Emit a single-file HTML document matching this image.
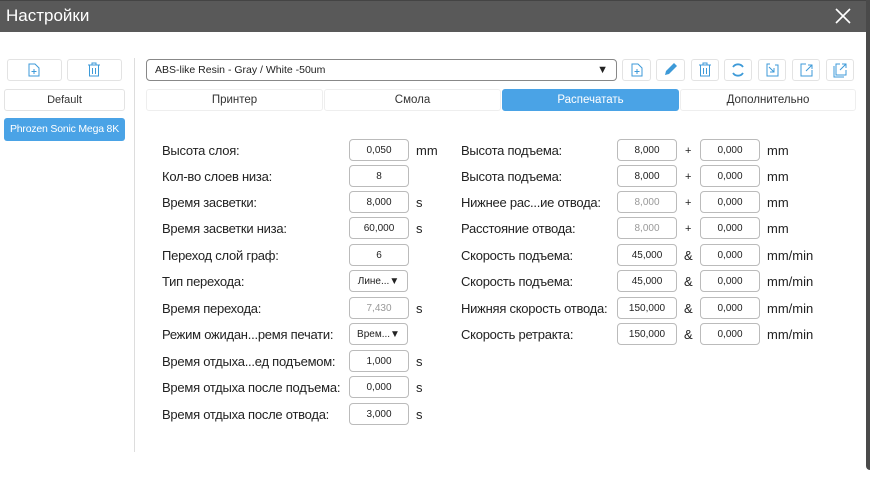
<!DOCTYPE html><html><head><meta charset="utf-8"><style>
*{box-sizing:border-box;margin:0;padding:0}
body{width:870px;height:477px;background:#fff;font-family:"Liberation Sans","DejaVu Sans",sans-serif;position:relative;overflow:hidden;color:#222}
.a{position:absolute}
.tb{left:0;top:0;width:870px;height:32px;background:#595959;border-top:1px solid #444}
.tt{left:6px;top:6px;color:#fff;font-size:17px}
.rb{left:866px;top:0;width:4px;height:470px;background:#4a4a4a;border-bottom-left-radius:4px}
.btn{border:1px solid #e3e3e3;border-radius:3px;background:#fff}
.lbl{font-size:13px;letter-spacing:-0.25px;color:#222;white-space:nowrap}
.in{width:60px;height:22px;border:1px solid #bbb;border-radius:4px;font-size:10px;text-align:center;line-height:21px;color:#222;background:#fff}
.g{color:#999}
.u{font-size:13px}
.p{font-size:11px}
.tab{top:89px;height:22px;font-size:11.5px;text-align:center;line-height:21px;color:#333;border:1px solid #eee;border-radius:3px;background:#fff}
</style></head><body>
<div class="a tb"></div><div class="a tt">Настройки</div>
<svg class="a" style="left:835px;top:8px" width="16" height="16"><path d="M1 1L15 15M15 1L1 15" stroke="#fff" stroke-width="1.6"/></svg>
<div class="a rb"></div>

<div class="a btn" style="left:7px;top:59px;width:55px;height:22px"></div>
<svg class="a" style="left:28px;top:63px" width="12" height="14"><path d="M1 1h6l4 4v8H1z" fill="none" stroke="#3d9ad8"/><path d="M6 6v5M3.5 8.5h5" stroke="#3d9ad8"/></svg>
<div class="a btn" style="left:67px;top:59px;width:55px;height:22px"></div>
<svg class="a" style="left:87px;top:62px" width="14" height="15"><path d="M1 3h12M5 3V1h4v2M2.5 3v11h9V3M5.5 6v6M8.5 6v6" fill="none" stroke="#3d9ad8"/></svg>
<div class="a btn" style="left:4px;top:89px;width:121px;height:22px;font-size:11px;text-align:center;line-height:21px;color:#333">Default</div>
<div class="a" style="left:4px;top:118px;width:121px;height:23px;background:#4aa3e6;border-radius:3px;color:#fff;font-size:10.5px;letter-spacing:-0.2px;text-align:center;line-height:23px">Phrozen Sonic Mega 8K</div>
<div class="a" style="left:134px;top:58px;width:1px;height:394px;background:#ddd"></div>

<div class="a" style="left:146px;top:59px;width:471px;height:22px;border:1px solid #888;border-radius:4px;font-size:10.5px;line-height:20px;padding-left:8px">ABS-like Resin - Gray / White -50um<span class="a" style="right:8px;top:0;font-size:11px">▼</span></div>
<div class="a btn" style="left:622px;top:59px;width:29px;height:22px"></div>
<svg class="a" style="left:631px;top:63px" width="12" height="14"><path d="M1 1h6l4 4v8H1z" fill="none" stroke="#3d9ad8"/><path d="M6 6v5M3.5 8.5h5" stroke="#3d9ad8"/></svg>
<div class="a btn" style="left:656px;top:59px;width:29px;height:22px"></div>
<svg class="a" style="left:663px;top:62px" width="15" height="15"><path d="M2 13l1-4 8-8 3 3-8 8z" fill="#3d9ad8"/></svg>
<div class="a btn" style="left:691px;top:59px;width:28px;height:22px"></div>
<svg class="a" style="left:698px;top:62px" width="14" height="15"><path d="M1 3h12M5 3V1h4v2M2.5 3v11h9V3M5.5 6v6M8.5 6v6" fill="none" stroke="#3d9ad8"/></svg>
<div class="a btn" style="left:724px;top:59px;width:28px;height:22px"></div>
<svg class="a" style="left:730px;top:62px" width="16" height="16"><path d="M13 5A6 6 0 0 0 3 5M3 11a6 6 0 0 0 10 0" fill="none" stroke="#3d9ad8" stroke-width="1.8"/></svg>
<div class="a btn" style="left:758px;top:59px;width:28px;height:22px"></div>
<svg class="a" style="left:764px;top:62px" width="16" height="16"><path d="M6 2H3v12h11V3h-3M5 5l5 5M10 6v4H6" fill="none" stroke="#3d9ad8"/></svg>
<div class="a btn" style="left:792px;top:59px;width:28px;height:22px"></div>
<svg class="a" style="left:798px;top:62px" width="16" height="16"><path d="M8 2H3v12h11V8M8 9l6-6M10 3h4v4" fill="none" stroke="#3d9ad8"/></svg>
<div class="a btn" style="left:826px;top:59px;width:28px;height:22px"></div>
<svg class="a" style="left:832px;top:62px" width="16" height="16"><path d="M8 2H4v11h10V8M8 8l6-6M10 2h4v4M2 4v11h10" fill="none" stroke="#3d9ad8"/></svg>

<div class="a tab" style="left:146px;width:177px">Принтер</div>
<div class="a tab" style="left:324px;width:177px">Смола</div>
<div class="a tab" style="left:502px;width:177px;background:#4aa3e6;color:#fff;border-color:#4aa3e6">Распечатать</div>
<div class="a tab" style="left:680px;width:176px">Дополнительно</div>

<div class="a lbl" style="left:162px;top:143px">Высота слоя:</div><div class="a in" style="left:349px;top:139px">0,050</div><div class="a u" style="left:416px;top:143px">mm</div>
<div class="a lbl" style="left:162px;top:169px">Кол-во слоев низа:</div><div class="a in" style="left:349px;top:165px">8</div>
<div class="a lbl" style="left:162px;top:195px">Время засветки:</div><div class="a in" style="left:349px;top:191px">8,000</div><div class="a u" style="left:416px;top:195px">s</div>
<div class="a lbl" style="left:162px;top:221px">Время засветки низа:</div><div class="a in" style="left:349px;top:217px">60,000</div><div class="a u" style="left:416px;top:221px">s</div>
<div class="a lbl" style="left:162px;top:248px">Переход слой граф:</div><div class="a in" style="left:349px;top:244px">6</div>
<div class="a lbl" style="left:162px;top:274px">Тип перехода:</div><div class="a in" style="left:349px;top:270px;width:59px">Лине...▼</div>
<div class="a lbl" style="left:162px;top:301px">Время перехода:</div><div class="a in g" style="left:349px;top:297px">7,430</div><div class="a u" style="left:416px;top:301px">s</div>
<div class="a lbl" style="left:162px;top:327px">Режим ожидан...ремя печати:</div><div class="a in" style="left:349px;top:323px;width:59px">Врем...▼</div>
<div class="a lbl" style="left:162px;top:354px">Время отдыха...ед подъемом:</div><div class="a in" style="left:349px;top:350px">1,000</div><div class="a u" style="left:416px;top:354px">s</div>
<div class="a lbl" style="left:162px;top:380px">Время отдыха после подъема:</div><div class="a in" style="left:349px;top:376px">0,000</div><div class="a u" style="left:416px;top:380px">s</div>
<div class="a lbl" style="left:162px;top:407px">Время отдыха после отвода:</div><div class="a in" style="left:349px;top:403px">3,000</div><div class="a u" style="left:416px;top:407px">s</div>

<div class="a lbl" style="left:461px;top:143px">Высота подъема:</div><div class="a in" style="left:617px;top:139px">8,000</div><div class="a p" style="left:685px;top:145px">+</div><div class="a in" style="left:700px;top:139px">0,000</div><div class="a u" style="left:767px;top:143px">mm</div>
<div class="a lbl" style="left:461px;top:169px">Высота подъема:</div><div class="a in" style="left:617px;top:165px">8,000</div><div class="a p" style="left:685px;top:171px">+</div><div class="a in" style="left:700px;top:165px">0,000</div><div class="a u" style="left:767px;top:169px">mm</div>
<div class="a lbl" style="left:461px;top:195px">Нижнее рас...ие отвода:</div><div class="a in g" style="left:617px;top:191px">8,000</div><div class="a p" style="left:685px;top:197px">+</div><div class="a in" style="left:700px;top:191px">0,000</div><div class="a u" style="left:767px;top:195px">mm</div>
<div class="a lbl" style="left:461px;top:221px">Расстояние отвода:</div><div class="a in g" style="left:617px;top:217px">8,000</div><div class="a p" style="left:685px;top:223px">+</div><div class="a in" style="left:700px;top:217px">0,000</div><div class="a u" style="left:767px;top:221px">mm</div>
<div class="a lbl" style="left:461px;top:248px">Скорость подъема:</div><div class="a in" style="left:617px;top:244px">45,000</div><div class="a u" style="left:684px;top:248px">&amp;</div><div class="a in" style="left:700px;top:244px">0,000</div><div class="a u" style="left:767px;top:248px">mm/min</div>
<div class="a lbl" style="left:461px;top:274px">Скорость подъема:</div><div class="a in" style="left:617px;top:270px">45,000</div><div class="a u" style="left:684px;top:274px">&amp;</div><div class="a in" style="left:700px;top:270px">0,000</div><div class="a u" style="left:767px;top:274px">mm/min</div>
<div class="a lbl" style="left:461px;top:301px">Нижняя скорость отвода:</div><div class="a in" style="left:617px;top:297px">150,000</div><div class="a u" style="left:684px;top:301px">&amp;</div><div class="a in" style="left:700px;top:297px">0,000</div><div class="a u" style="left:767px;top:301px">mm/min</div>
<div class="a lbl" style="left:461px;top:327px">Скорость ретракта:</div><div class="a in" style="left:617px;top:323px">150,000</div><div class="a u" style="left:684px;top:327px">&amp;</div><div class="a in" style="left:700px;top:323px">0,000</div><div class="a u" style="left:767px;top:327px">mm/min</div>
</body></html>
